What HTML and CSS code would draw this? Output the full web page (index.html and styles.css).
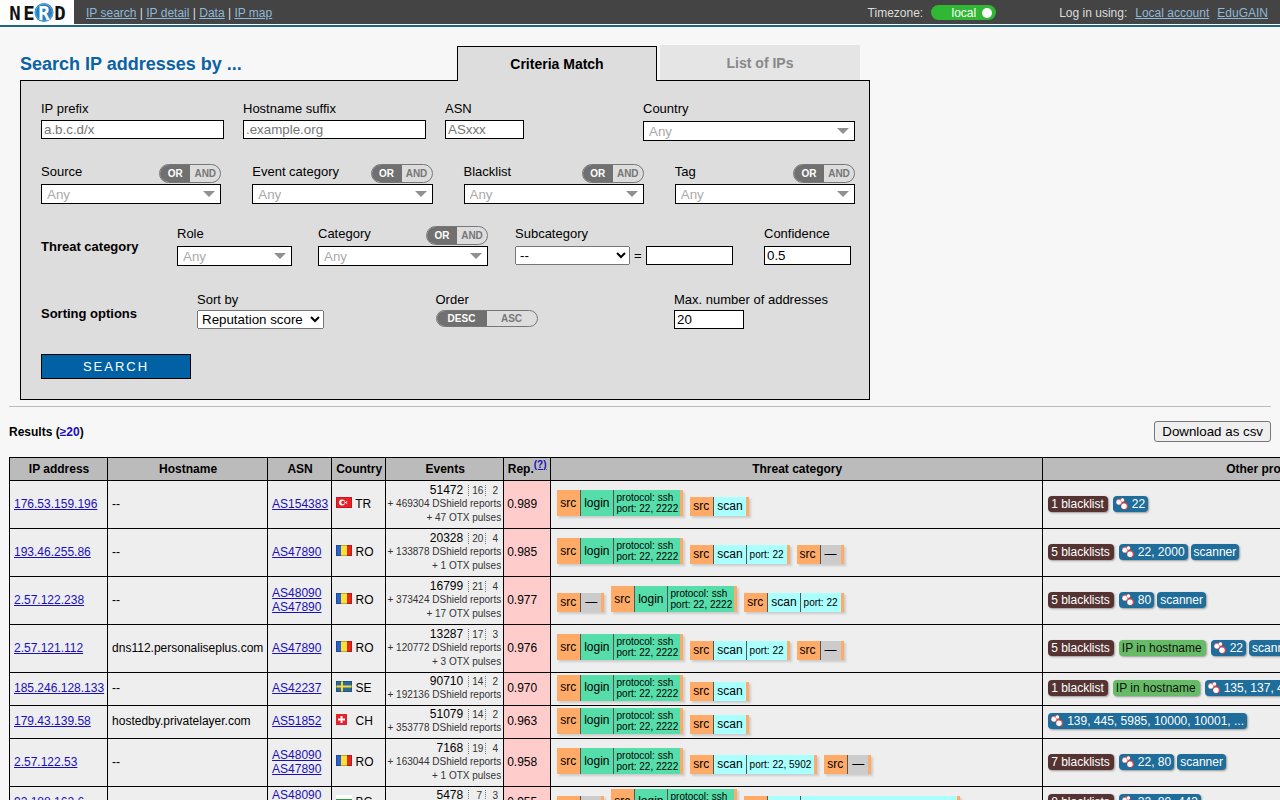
FILE: index.html
```html
<!DOCTYPE html>
<html lang="en">
<head>
  <meta charset="UTF-8">
  <meta name="viewport" content="width=device-width, initial-scale=1.0">
  <title>NERD - IP search</title>
  <link rel="stylesheet" href="styles.css">
</head>
<body>
  <!-- shared icons -->
  <svg class="defs" width="0" height="0">
    <symbol id="flag-tr" viewBox="0 0 16 11">
      <rect width="16" height="11" fill="#e8202a"/>
      <circle cx="6" cy="5.5" r="3" fill="#fff"/>
      <circle cx="7" cy="5.5" r="1.800" fill="#e8202a"/>
      <path d="M8 5.500l3.500-1.500-1 1.500 1 1.500z" fill="#fff"/>
      <rect x=".5" y=".5" width="15" height="10" fill="none" stroke="#b0101c" stroke-opacity=".6"/>
    </symbol>
    <symbol id="flag-ro" viewBox="0 0 16 11">
      <rect width="5" height="11" fill="#2a5fd0"/>
      <rect x="5" width="6" height="11" fill="#fde031"/>
      <rect x="11" width="5" height="11" fill="#e8281c"/>
      <rect x=".5" y=".5" width="15" height="10" fill="none" stroke="#000" stroke-opacity=".25"/>
    </symbol>
    <symbol id="flag-se" viewBox="0 0 16 11">
      <rect width="16" height="11" fill="#2b6a9c"/>
      <path d="M5 0h2v11H5zM0 4.5h16v2H0z" fill="#fbd934"/>
      <rect x=".5" y=".5" width="15" height="10" fill="none" stroke="#123" stroke-opacity=".3"/>
    </symbol>
    <symbol id="flag-ch" viewBox="0 0 16 11">
      <rect width="11" height="11" fill="#e6232a"/>
      <path d="M4.500 2h2v2.500H9v2H6.500V9h-2V6.500H2v-2h2.500z" fill="#fff"/>
    </symbol>
    <symbol id="flag-bg" viewBox="0 0 16 11">
      <rect width="16" height="4" fill="#fff"/>
      <rect y="4" width="16" height="3" fill="#2d9c3c"/>
      <rect y="7" width="16" height="4" fill="#d8282c"/>
    </symbol>
    <symbol id="shodan" viewBox="0 0 12 12">
      <circle cx="6" cy="2.500" r="2.500" fill="#e0484c"/>
      <circle cx="3" cy="4" r="3" fill="#e88084"/>
      <circle cx="8.500" cy="8" r="3.500" fill="#e0484c"/>
      <circle cx="6.500" cy="2" r="1.700" fill="#fff"/>
      <circle cx="2.800" cy="4.300" r="2.300" fill="#fff"/>
      <circle cx="8" cy="8.300" r="2.700" fill="#fff"/>
    </symbol>
  </svg>

  <header class="topbar">
    <a class="logo" href="#" aria-label="NERD">
      <svg width="58" height="22" viewBox="0 0 58 22">
        <circle cx="35" cy="10.500" r="9.500" fill="#2380c2"/>
        <circle cx="35" cy="10.500" r="8.500" fill="none" stroke="#8cc4e8" stroke-width=".6"/>
        <text x="6" y="18">N</text>
        <text x="20" y="18">E</text>
        <text x="35" y="18" class="logo-r">R</text>
        <text x="51" y="18">D</text>
      </svg>
    </a>
    <nav class="menu">
      <a href="#">IP search</a> | <a href="#">IP detail</a> | <a href="#">Data</a> | <a href="#">IP map</a>
    </nav>
    <div class="timezone">
      <span>Timezone:</span>
      <label class="switch"><input type="checkbox" class="hidden-input" checked>local<span class="knob"></span></label>
    </div>
    <div class="login">
      <span>Log in using:</span>
      <a href="#">Local account</a>
      <a href="#">EduGAIN</a>
    </div>
  </header>

  <section class="search">
    <div class="search-head">
      <h1>Search IP addresses by ...</h1>
      <button type="button" class="tab active">Criteria Match</button>
      <button type="button" class="tab">List of IPs</button>
    </div>
    <form class="panel">
      <div class="row row-text">
        <div class="field">
          <label for="subnet">IP prefix</label>
          <input type="text" id="subnet" class="w-large" placeholder="a.b.c.d/x">
        </div>
        <div class="field">
          <label for="hostname">Hostname suffix</label>
          <input type="text" id="hostname" class="w-large" placeholder=".example.org">
        </div>
        <div class="field">
          <label for="asn">ASN</label>
          <input type="text" id="asn" class="w-asn" placeholder="ASxxx">
        </div>
        <div class="field country">
          <label for="country">Country</label>
          <span class="any"><select id="country"><option>Any</option></select></span>
        </div>
      </div>

      <div class="row row-filters">
        <div class="field">
          <div class="field-head">
            <label for="source">Source</label>
            <span class="toggle">
              <input type="radio" class="hidden-input" name="source_op" id="source_or" checked><label for="source_or">OR</label>
              <input type="radio" class="hidden-input" name="source_op" id="source_and"><label for="source_and">AND</label>
            </span>
          </div>
          <span class="any"><select id="source"><option>Any</option></select></span>
        </div>
        <div class="field">
          <div class="field-head">
            <label for="event">Event category</label>
            <span class="toggle">
              <input type="radio" class="hidden-input" name="cat_op" id="cat_or" checked><label for="cat_or">OR</label>
              <input type="radio" class="hidden-input" name="cat_op" id="cat_and"><label for="cat_and">AND</label>
            </span>
          </div>
          <span class="any"><select id="event"><option>Any</option></select></span>
        </div>
        <div class="field">
          <div class="field-head">
            <label for="blacklist">Blacklist</label>
            <span class="toggle">
              <input type="radio" class="hidden-input" name="bl_op" id="bl_or" checked><label for="bl_or">OR</label>
              <input type="radio" class="hidden-input" name="bl_op" id="bl_and"><label for="bl_and">AND</label>
            </span>
          </div>
          <span class="any"><select id="blacklist"><option>Any</option></select></span>
        </div>
        <div class="field">
          <div class="field-head">
            <label for="tag">Tag</label>
            <span class="toggle">
              <input type="radio" class="hidden-input" name="tag_op" id="tag_or" checked><label for="tag_or">OR</label>
              <input type="radio" class="hidden-input" name="tag_op" id="tag_and"><label for="tag_and">AND</label>
            </span>
          </div>
          <span class="any"><select id="tag"><option>Any</option></select></span>
        </div>
      </div>

      <div class="row row-threat">
        <strong>Threat category</strong>
        <div class="field">
          <div class="field-head"><label for="role">Role</label></div>
          <span class="any"><select id="role"><option>Any</option></select></span>
        </div>
        <div class="field category">
          <div class="field-head">
            <label for="tcat">Category</label>
            <span class="toggle">
              <input type="radio" class="hidden-input" name="tcat_op" id="tcat_or" checked><label for="tcat_or">OR</label>
              <input type="radio" class="hidden-input" name="tcat_op" id="tcat_and"><label for="tcat_and">AND</label>
            </span>
          </div>
          <span class="any"><select id="tcat"><option>Any</option></select></span>
        </div>
        <div class="field">
          <div class="field-head"><label for="subcat">Subcategory</label></div>
          <div class="pair">
            <select id="subcat" class="native w-sub"><option>--</option></select>
            <span>=</span>
            <input type="text" class="w-small" aria-label="Subcategory value">
          </div>
        </div>
        <div class="field">
          <div class="field-head"><label for="confidence">Confidence</label></div>
          <input type="text" id="confidence" class="w-small" value="0.5">
        </div>
      </div>

      <div class="row row-sort">
        <strong>Sorting options</strong>
        <div class="field">
          <label for="sortby">Sort by</label>
          <select id="sortby" class="native w-sort"><option>Reputation score</option></select>
        </div>
        <div class="field">
          <span class="caption">Order</span>
          <span class="toggle wide">
            <input type="radio" class="hidden-input" name="order" id="desc" checked><label for="desc">DESC</label>
            <input type="radio" class="hidden-input" name="order" id="asc"><label for="asc">ASC</label>
          </span>
        </div>
        <div class="field">
          <label for="limit">Max. number of addresses</label>
          <input type="text" id="limit" class="w-limit" value="20">
        </div>
      </div>

      <button type="submit" class="submit">SEARCH</button>
    </form>
  </section>

  <section class="results">
    <div class="results-head">
      <h2>Results (<span class="count">≥20</span>)</h2>
      <button type="button" class="download">Download as csv</button>
    </div>
    <table>
      <thead>
        <tr>
          <th class="c-ip">IP address</th>
          <th class="c-host">Hostname</th>
          <th class="c-asn">ASN</th>
          <th class="c-country">Country</th>
          <th class="c-events">Events</th>
          <th class="c-rep">Rep.<sup><a href="#">(?)</a></sup></th>
          <th class="c-threat">Threat category</th>
          <th class="c-other">Other properties</th>
        </tr>
      </thead>
      <tbody>
        <tr class="tall">
          <td><a href="#">176.53.159.196</a></td>
          <td>--</td>
          <td><a href="#">AS154383</a></td>
          <td><svg class="flag"><use href="#flag-tr"/></svg> TR</td>
          <td class="events"><div>51472<span>16</span><span>2</span></div><small>+ 469304 DShield reports</small><small>+ 47 OTX pulses</small></td>
          <td class="rep">0.989</td>
          <td class="threat"><div class="chips">
            <span class="chip"><b>src</b><i class="login-cat">login</i><em class="login-cat">protocol: ssh<br>port: 22, 2222</em></span>
            <span class="chip"><b>src</b><i class="scan-cat">scan</i></span>
          </div></td>
          <td class="other"><div class="tags"><span class="tag bl">1 blacklist</span><span class="ports"><span class="tag"><svg class="shodan"><use href="#shodan"/></svg>22</span></span></div></td>
        </tr>
        <tr class="tall">
          <td><a href="#">193.46.255.86</a></td>
          <td>--</td>
          <td><a href="#">AS47890</a></td>
          <td><svg class="flag"><use href="#flag-ro"/></svg> RO</td>
          <td class="events"><div>20328<span>20</span><span>4</span></div><small>+ 133878 DShield reports</small><small>+ 1 OTX pulses</small></td>
          <td class="rep">0.985</td>
          <td class="threat"><div class="chips">
            <span class="chip"><b>src</b><i class="login-cat">login</i><em class="login-cat">protocol: ssh<br>port: 22, 2222</em></span>
            <span class="chip"><b>src</b><i class="scan-cat">scan</i><em class="scan-cat">port: 22</em></span>
            <span class="chip"><b>src</b><i class="no-cat">—</i></span>
          </div></td>
          <td class="other"><div class="tags"><span class="tag bl">5 blacklists</span><span class="ports"><span class="tag"><svg class="shodan"><use href="#shodan"/></svg>22, 2000</span><span class="tag">scanner</span></span></div></td>
        </tr>
        <tr class="tall">
          <td><a href="#">2.57.122.238</a></td>
          <td>--</td>
          <td><a href="#">AS48090</a><br><a href="#">AS47890</a></td>
          <td><svg class="flag"><use href="#flag-ro"/></svg> RO</td>
          <td class="events"><div>16799<span>21</span><span>4</span></div><small>+ 373424 DShield reports</small><small>+ 17 OTX pulses</small></td>
          <td class="rep">0.977</td>
          <td class="threat"><div class="chips">
            <span class="chip"><b>src</b><i class="no-cat">—</i></span>
            <span class="chip"><b>src</b><i class="login-cat">login</i><em class="login-cat">protocol: ssh<br>port: 22, 2222</em></span>
            <span class="chip"><b>src</b><i class="scan-cat">scan</i><em class="scan-cat">port: 22</em></span>
          </div></td>
          <td class="other"><div class="tags"><span class="tag bl">5 blacklists</span><span class="ports"><span class="tag"><svg class="shodan"><use href="#shodan"/></svg>80</span><span class="tag">scanner</span></span></div></td>
        </tr>
        <tr class="tall">
          <td><a href="#">2.57.121.112</a></td>
          <td>dns112.personaliseplus.com</td>
          <td><a href="#">AS47890</a></td>
          <td><svg class="flag"><use href="#flag-ro"/></svg> RO</td>
          <td class="events"><div>13287<span>17</span><span>3</span></div><small>+ 120772 DShield reports</small><small>+ 3 OTX pulses</small></td>
          <td class="rep">0.976</td>
          <td class="threat"><div class="chips">
            <span class="chip"><b>src</b><i class="login-cat">login</i><em class="login-cat">protocol: ssh<br>port: 22, 2222</em></span>
            <span class="chip"><b>src</b><i class="scan-cat">scan</i><em class="scan-cat">port: 22</em></span>
            <span class="chip"><b>src</b><i class="no-cat">—</i></span>
          </div></td>
          <td class="other"><div class="tags"><span class="tag bl">5 blacklists</span><span class="tag host">IP in hostname</span><span class="ports"><span class="tag"><svg class="shodan"><use href="#shodan"/></svg>22</span><span class="tag">scanner</span></span></div></td>
        </tr>
        <tr>
          <td><a href="#">185.246.128.133</a></td>
          <td>--</td>
          <td><a href="#">AS42237</a></td>
          <td><svg class="flag"><use href="#flag-se"/></svg> SE</td>
          <td class="events"><div>90710<span>14</span><span>2</span></div><small>+ 192136 DShield reports</small></td>
          <td class="rep">0.970</td>
          <td class="threat"><div class="chips">
            <span class="chip"><b>src</b><i class="login-cat">login</i><em class="login-cat">protocol: ssh<br>port: 22, 2222</em></span>
            <span class="chip"><b>src</b><i class="scan-cat">scan</i></span>
          </div></td>
          <td class="other"><div class="tags"><span class="tag bl">1 blacklist</span><span class="tag host">IP in hostname</span><span class="ports"><span class="tag"><svg class="shodan"><use href="#shodan"/></svg>135, 137, 445</span></span></div></td>
        </tr>
        <tr>
          <td><a href="#">179.43.139.58</a></td>
          <td>hostedby.privatelayer.com</td>
          <td><a href="#">AS51852</a></td>
          <td><svg class="flag"><use href="#flag-ch"/></svg> CH</td>
          <td class="events"><div>51079<span>14</span><span>2</span></div><small>+ 353778 DShield reports</small></td>
          <td class="rep">0.963</td>
          <td class="threat"><div class="chips">
            <span class="chip"><b>src</b><i class="login-cat">login</i><em class="login-cat">protocol: ssh<br>port: 22, 2222</em></span>
            <span class="chip"><b>src</b><i class="scan-cat">scan</i></span>
          </div></td>
          <td class="other"><div class="tags"><span class="ports"><span class="tag"><svg class="shodan"><use href="#shodan"/></svg>139, 445, 5985, 10000, 10001, ...</span></span></div></td>
        </tr>
        <tr class="tall">
          <td><a href="#">2.57.122.53</a></td>
          <td>--</td>
          <td><a href="#">AS48090</a><br><a href="#">AS47890</a></td>
          <td><svg class="flag"><use href="#flag-ro"/></svg> RO</td>
          <td class="events"><div>7168<span>19</span><span>4</span></div><small>+ 163044 DShield reports</small><small>+ 1 OTX pulses</small></td>
          <td class="rep">0.958</td>
          <td class="threat"><div class="chips">
            <span class="chip"><b>src</b><i class="login-cat">login</i><em class="login-cat">protocol: ssh<br>port: 22, 2222</em></span>
            <span class="chip"><b>src</b><i class="scan-cat">scan</i><em class="scan-cat">port: 22, 5902</em></span>
            <span class="chip"><b>src</b><i class="no-cat">—</i></span>
          </div></td>
          <td class="other"><div class="tags"><span class="tag bl">7 blacklists</span><span class="ports"><span class="tag"><svg class="shodan"><use href="#shodan"/></svg>22, 80</span><span class="tag">scanner</span></span></div></td>
        </tr>
        <tr>
          <td><a href="#">92.188.162.6</a></td>
          <td></td>
          <td><a href="#">AS48090</a><br><a href="#">AS47890</a></td>
          <td><svg class="flag"><use href="#flag-bg"/></svg> BG</td>
          <td class="events"><div>5478<span>7</span><span>3</span></div><small>+ 158210 DShield reports</small></td>
          <td class="rep">0.955</td>
          <td class="threat"><div class="chips">
            <span class="chip"><b>src</b><i class="no-cat">—</i></span>
            <span class="chip"><b>src</b><i class="login-cat">login</i><em class="login-cat">protocol: ssh<br>port: 22, 2222</em></span>
            <span class="chip"><b>src</b><i class="scan-cat">scan</i><em class="scan-cat">port: 22, 80, 443, 2222, 8080, 844</em></span>
          </div></td>
          <td class="other"><div class="tags"><span class="tag bl">8 blacklists</span><span class="ports"><span class="tag"><svg class="shodan"><use href="#shodan"/></svg>22, 80, 443</span></span></div></td>
        </tr>
      </tbody>
    </table>
  </section>
</body>
</html>
```

FILE: styles.css
```css
* {
  box-sizing: border-box;
}
body {
  margin: 0;
  background: #f7f7f7;
  color: #000;
  font-family: "Liberation Sans", Arial, sans-serif;
  font-size: 12px;
  line-height: 14px;
}
.defs {
  display: block;
}
.hidden-input {
  position: absolute;
  opacity: 0;
  width: 1px;
  height: 1px;
  margin: 0;
}

/* top bar */
.topbar {
  display: flex;
  align-items: center;
  height: 27px;
  padding-right: 12px;
  background: #444;
  color: #ddd;
  border-bottom: 2px solid #1f6585;
  box-shadow: inset 0 -1px #fff;
}
.topbar a {
  color: #8fb8d6;
}
.logo {
  display: flex;
  align-items: center;
  width: 74px;
  height: 25px;
  padding-left: 9px;
  background: #fff;
}
.logo text {
  font-family: "DejaVu Sans Mono", monospace;
  font-size: 19px;
  font-weight: bold;
  text-anchor: middle;
  fill: #111;
}
.logo .logo-r {
  fill: #fff;
}
.menu {
  margin-left: 12px;
}
.timezone {
  display: flex;
  align-items: center;
  gap: 8px;
  margin-left: auto;
}
.switch {
  display: flex;
  align-items: center;
  justify-content: flex-end;
  gap: 6px;
  width: 65px;
  height: 15px;
  padding-right: 4px;
  border-radius: 8px;
  background: #30b834;
  color: #fff;
  cursor: pointer;
}
.knob {
  width: 10px;
  height: 10px;
  border-radius: 5px;
  background: #fff;
}
.login {
  display: flex;
  gap: 8px;
  margin-left: 63px;
}

/* search form */
.search {
  max-width: 850px;
  margin: 18px 20px 0;
  font-size: 13px;
}
.search-head {
  display: flex;
  align-items: flex-end;
  gap: 3px;
  padding-right: 10px;
}
h1 {
  margin: 0 auto 6px 0;
  color: #0b62a3;
  font-size: 18px;
  line-height: 20px;
}
.tab {
  width: 200px;
  height: 35px;
  border: 0;
  background: #e5e5e5;
  color: #888;
  font-family: inherit;
  font-size: 14px;
  font-weight: bold;
}
.tab.active {
  margin-bottom: -1px;
  border: 1px solid #000;
  border-bottom: 0;
  background: #ddd;
  color: #000;
  position: relative;
}
.panel {
  padding: 20px 14px 20px 20px;
  border: 1px solid #000;
  background: #ddd;
}
.row {
  display: flex;
}
.field {
  display: flex;
  flex-direction: column;
  align-items: flex-start;
}
.field > label,
.caption {
  line-height: 15px;
  margin-bottom: 4px;
}
.field-head {
  display: flex;
  align-items: flex-start;
  justify-content: space-between;
  width: 100%;
  height: 20px;
}
.field-head > label {
  line-height: 16px;
}
input[type="text"] {
  height: 19px;
  padding: 1px 2px;
  border: 1px solid #000;
  background: #fff;
  color: #000;
  font-family: inherit;
}
.w-large {
  width: 183px;
}
.w-asn {
  width: 79px;
}
.w-small {
  width: 87px;
}
.w-limit {
  width: 70px;
}
.native {
  height: 19px;
  font-family: inherit;
}
.w-sub {
  width: 115px;
}
.w-sort {
  width: 127px;
}
.any {
  position: relative;
  width: 100%;
}
.any select {
  display: block;
  width: 100%;
  height: 20px;
  padding: 0 20px 0 5px;
  appearance: none;
  border: 1px solid #000;
  border-radius: 0;
  background: #fff;
  color: #aaa;
  font-family: inherit;
}
.any::after {
  content: "";
  position: absolute;
  right: 6px;
  top: 7px;
  border: 6px solid transparent;
  border-top-color: #909090;
  border-bottom: 0;
  pointer-events: none;
}
.toggle {
  display: flex;
  width: 62px;
  height: 19px;
  border: 1px solid #777;
  border-radius: 10px;
  overflow: hidden;
  position: relative;
}
.toggle label {
  flex: 1;
  color: #777;
  font-size: 10px;
  font-weight: bold;
  line-height: 17px;
  text-align: center;
}
.toggle input:checked + label {
  background: #707070;
  color: #fff;
}
.toggle.wide {
  width: 102px;
  height: 17px;
}
.toggle.wide label {
  line-height: 15px;
}
.row-text {
  gap: 19px;
}
.country {
  width: 212px;
  margin-left: auto;
}
.field.country > label {
  margin-bottom: 5px;
}
.row-filters {
  display: grid;
  grid-template-columns: repeat(4, 1fr);
  gap: 31px;
  margin-top: 23px;
}
.row-threat {
  display: grid;
  grid-template-columns: 110px 115px 171px 1fr 87px;
  column-gap: 26px;
  align-items: start;
  margin-top: 22px;
  padding-right: 4px;
}
.category {
  width: 170px;
}
.row-threat strong {
  margin-top: 14px;
}
.pair {
  display: flex;
  align-items: center;
  gap: 4px;
}
.row-sort {
  display: grid;
  grid-template-columns: 156px 1fr 1fr 181px;
  align-items: start;
  margin-top: 26px;
}
.row-sort .field > label,
.row-sort .caption {
  margin-bottom: 3px;
}
.row-sort strong {
  margin-top: 15px;
}
.submit {
  width: 150px;
  height: 25px;
  margin-top: 25px;
  padding: 0;
  display: block;
  border: 1px solid #000;
  background: #0062a5;
  color: #fff;
  font-family: inherit;
  font-size: 13px;
  letter-spacing: 2px;
}

/* results */
.results {
  margin: 6px 9px 0;
  border-top: 1px solid #bbb;
}
.results-head {
  display: flex;
  align-items: center;
  justify-content: space-between;
  padding: 14px 0 15px;
}
h2 {
  margin: 0;
  font-size: 12px;
}
.count {
  color: #1a0dbb;
}
.download {
  height: 21px;
  padding: 1px 7px;
  border: 1px solid #767676;
  border-radius: 3px;
  background: #efefef;
  font-family: inherit;
}
table {
  border-collapse: collapse;
  white-space: nowrap;
  background: #eee;
}
th,
td {
  box-sizing: content-box;
  border: 1px solid #000;
  padding: 1px 3px 3px 4px;
}
th {
  height: 18px;
  padding-top: 2px;
  padding-bottom: 2px;
  background: #bbb;
}
td {
  height: 28px;
}
.tall td {
  height: 43px;
}
td a,
th a {
  color: #1a10b8;
}
sup {
  font-size: 10px;
  line-height: 0;
}
th.c-ip {
  min-width: 89px;
}
th.c-host {
  min-width: 152px;
}
th.c-asn {
  min-width: 56px;
}
th.c-country {
  min-width: 46px;
}
th.c-events {
  min-width: 110px;
}
th.c-rep {
  min-width: 40px;
  padding-left: 3px;
}
th.c-threat {
  min-width: 484px;
}
th.c-other {
  min-width: 452px;
}
.flag {
  width: 16px;
  height: 11px;
}
td.events {
  padding-left: 1px;
  padding-right: 2px;
  text-align: right;
}
.events div,
.events small {
  display: block;
}
.events small {
  color: #333;
  font-size: 10px;
}
.events span {
  display: inline-block;
  width: 17px;
  margin-left: 5px;
  padding: 0 3px;
  border-left: 1px dotted #777;
  color: #333;
  font-size: 10px;
  line-height: 11px;
}
.events span + span {
  width: 16px;
  margin-left: 0;
}
td.rep {
  padding-left: 3px;
  background: #ffcccc;
}
td.threat,
td.other {
  padding: 0 5px 3px;
}
td.other {
  padding-bottom: 2px;
}
.chips {
  display: flex;
  align-items: flex-end;
  gap: 7px;
  padding-left: 1px;
}
.chip {
  display: flex;
  min-height: 19px;
  border-right: 3px solid #fa6;
  box-shadow: 2px 2px 2px #ccc;
  line-height: 19px;
}
.chip b,
.chip i,
.chip em {
  display: flex;
  align-items: center;
  padding: 0 3px;
  font-style: normal;
  font-weight: normal;
}
.chip b {
  padding-right: 4px;
  background: #fa6;
}
.chip i,
.chip em {
  border-left: 1px solid #555;
}
.chip em {
  display: block;
  padding: 2px 2px 2px 3px;
  font-size: 10px;
  line-height: 11px;
}
.chip em.scan-cat {
  padding: 4px 3px 4px 3px;
}
.login-cat {
  background: #5da;
}
.scan-cat {
  background: #aff;
}
.chip .no-cat {
  padding: 0 4px;
  background: #ccc;
}
.tags,
.ports {
  display: flex;
  gap: 5px;
}
.ports {
  gap: 3px;
}
.tag {
  display: flex;
  align-items: center;
  gap: 4px;
  height: 16px;
  padding: 0 3px;
  border-radius: 4px;
  background: #1f6d9b;
  box-shadow: 1px 1px 2px #999;
  color: #fff;
}
.tag.bl,
.tag.host {
  padding-right: 4px;
}
.tag.bl {
  background: #533;
}
.tag.host {
  background: #6b6;
  color: #111;
}
.shodan {
  width: 12px;
  height: 12px;
}
```
